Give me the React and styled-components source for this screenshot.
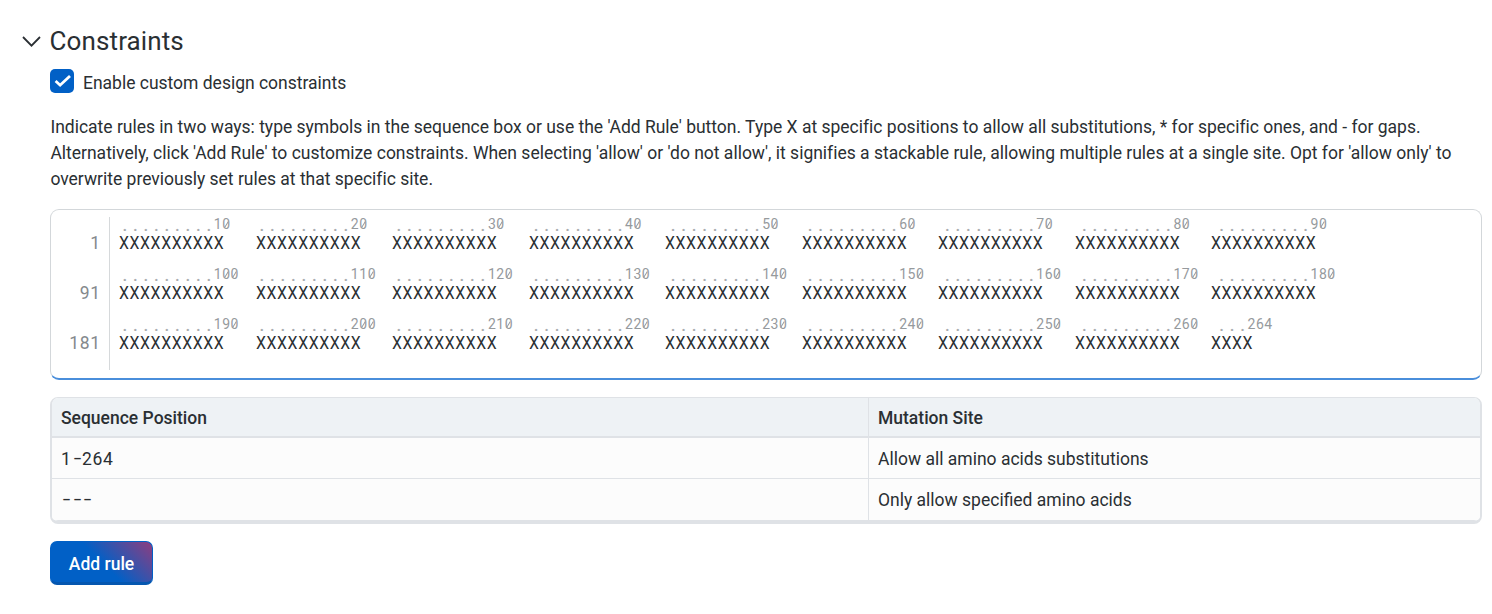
import React from 'react';
import styled, { createGlobalStyle } from 'styled-components';

const GlobalStyle = createGlobalStyle`
  * { box-sizing: border-box; }
  body {
    margin: 0;
    background: #fff;
    color: #2a2f33;
    font-family: Roboto, sans-serif;
    font-size: 17.5px;
    line-height: 26px;
  }
`;

const Page = styled.main`
  height: 614px;
  padding: 24px 10px 0 50px;
  overflow: hidden;
`;

const Heading = styled.h2`
  display: flex;
  align-items: center;
  gap: 8.5px;
  height: 34px;
  margin: 0 0 0 -28px;
  font-size: 26px;
  font-weight: 400;
  line-height: 34px;
  letter-spacing: 0.12px;
`;

const CheckRow = styled.label`
  display: flex;
  align-items: center;
  gap: 9px;
  height: 26px;
  margin-top: 10px;
  letter-spacing: -0.01px;
`;

const CheckBox = styled.span`
  display: flex;
  width: 24px;
  height: 24px;
  margin-top: -1px;
  border-radius: 5px;
  background: #0160c6;
`;

const CheckLabel = styled.span`
  padding-top: 3px;
`;

const Help = styled.p`
  margin: 20px 0 0;
  padding-left: 0.4px;
  white-space: nowrap;
  letter-spacing: -0.007px;
`;

const Editor = styled.section`
  display: flex;
  height: 171px;
  margin-top: 17px;
  padding: 7px 0 9px;
  border: 1px solid #d3d7da;
  border-bottom: 2px solid #4a8edb;
  border-radius: 9px;
`;

const Gutter = styled.div`
  width: 59px;
  height: 153px;
  padding: 13px 9px 0 0;
  border-right: 1px solid #d6d9db;
  color: #84898d;
  text-align: right;
`;

const LineNumber = styled.div`
  height: 50px;
  line-height: 26px;
  letter-spacing: 0.67px;
  margin-right: -0.67px;
`;

const Lines = styled.div`
  padding-left: 9px;
`;

const Line = styled.div`
  height: 50px;
`;

const Ruler = styled.div`
  display: flex;
  height: 16px;
  color: #969a9d;
  font-size: 14px;
  line-height: 14px;
`;

const Tick = styled.span`
  display: flex;
  flex: none;
  width: 137.1px;
`;

const Dot = styled.span`
  width: 10.5px;
  padding-left: 1px;
  line-height: 16px;
  text-align: center;
  color: #a9acaf;
  font-size: 17px;
  font-weight: 500;
`;

const Digit = styled.span`
  position: relative;
  width: 8.4px;
  text-align: center;
  ${(p) => p.$slashed && `
    &::after {
      content: '';
      position: absolute;
      left: 3.7px;
      top: 3.5px;
      width: 1px;
      height: 7px;
      background: currentColor;
      transform: rotate(32deg);
    }
  `}
`;

const Residues = styled.div`
  display: flex;
  height: 20px;
  line-height: 20px;
`;

const Block = styled.span`
  flex: none;
  width: 136.5px;
  letter-spacing: 0.68px;
  white-space: nowrap;
  transform: scaleX(0.904);
  transform-origin: 0 50%;
`;

const Table = styled.div`
  height: 127px;
  margin-top: 17px;
  border: solid #dfe2e6;
  border-width: 1px 2px 3px 2px;
  border-radius: 8px;
  overflow: hidden;
  background: #fcfcfc;
`;

const Row = styled.div`
  display: grid;
  grid-template-columns: 816px 1fr;
  height: ${(p) => (p.$head ? 40 : 41)}px;
  border-bottom: ${(p) => (p.$head ? 2 : 1)}px solid #dfe2e6;
  background: ${(p) => (p.$head ? '#eef2f5' : '#fcfcfc')};
  font-weight: ${(p) => (p.$head ? 500 : 400)};
  &:last-child { height: 42px; }
`;

const Cell = styled.div`
  padding: ${(p) => (p.$head ? 7 : 8)}px 9px 0;
  letter-spacing: ${(p) => (p.$mono ? '0.67px' : 'normal')};
  & + & { border-left: 1px solid #dfe2e6; }
`;

const Dash = styled.span`
  display: inline-block;
  width: 10.5px;
  text-align: center;
  letter-spacing: 0;
  transform: scaleX(0.75);
`;

const AddButton = styled.button`
  display: block;
  width: 103px;
  height: 44px;
  margin-top: 17px;
  padding: 4px 0 0;
  border: 1px solid #0160c6;
  border-bottom: 3px solid #0557b0;
  border-radius: 7px;
  background: linear-gradient(45deg, #0160c6 50%, #8e3d80 100%);
  color: #fff;
  font: 500 17.5px Roboto, sans-serif;
`;

const ROWS = [
  { start: 1, ticks: [10, 20, 30, 40, 50, 60, 70, 80, 90] },
  { start: 91, ticks: [100, 110, 120, 130, 140, 150, 160, 170, 180] },
  { start: 181, ticks: [190, 200, 210, 220, 230, 240, 250, 260, 264] },
];

const blockLength = (tick) => tick % 10 || 10;

function MonoText({ text }) {
  return [...text].map((c, i) => (c === '-' ? <Dash key={i}>–</Dash> : c));
}

function SequenceLine({ ticks }) {
  return (
    <Line>
      <Ruler>
        {ticks.map((t) => (
          <Tick key={t}>
            {Array.from({ length: blockLength(t) - 1 }, (_, i) => <Dot key={`dot${i}`}>.</Dot>)}
            {[...String(t)].map((d, i) => (
              <Digit key={i} $slashed={d === '0'}>{d}</Digit>
            ))}
          </Tick>
        ))}
      </Ruler>
      <Residues>
        {ticks.map((t) => (
          <Block key={t}>{'X'.repeat(blockLength(t))}</Block>
        ))}
      </Residues>
    </Line>
  );
}

export default function App() {
  return (
    <>
      <GlobalStyle />
      <Page>
        <Heading>
          <svg width="19" height="12" viewBox="0 0 19 12" fill="none" stroke="#2a2f33" strokeWidth="1.8">
            <path d="M1 2 9.5 10.6 18 2" />
          </svg>
          Constraints
        </Heading>
        <CheckRow>
          <CheckBox>
            <svg width="24" height="24" viewBox="0 0 24 24" fill="none" stroke="#fff" strokeWidth="2.8">
              <path d="M5.6 12 10.1 16.2 20 6.9" />
            </svg>
          </CheckBox>
          <CheckLabel>Enable custom design constraints</CheckLabel>
        </CheckRow>
        <Help>
          Indicate rules in two ways: type symbols in the sequence box or use the 'Add Rule' button. Type X at specific positions to allow all substitutions, * for specific ones, and - for gaps.
          <br />
          Alternatively, click 'Add Rule' to customize constraints. When selecting 'allow' or 'do not allow', it signifies a stackable rule, allowing multiple rules at a single site. Opt for 'allow only' to
          <br />
          overwrite previously set rules at that specific site.
        </Help>
        <Editor>
          <Gutter>
            {ROWS.map((r) => <LineNumber key={r.start}>{r.start}</LineNumber>)}
          </Gutter>
          <Lines>
            {ROWS.map((r) => <SequenceLine key={r.start} ticks={r.ticks} />)}
          </Lines>
        </Editor>
        <Table>
          <Row $head>
            <Cell $head>Sequence Position</Cell>
            <Cell $head>Mutation Site</Cell>
          </Row>
          <Row>
            <Cell $mono><MonoText text="1-264" /></Cell>
            <Cell>Allow all amino acids substitutions</Cell>
          </Row>
          <Row>
            <Cell $mono><MonoText text="---" /></Cell>
            <Cell>Only allow specified amino acids</Cell>
          </Row>
        </Table>
        <AddButton>Add rule</AddButton>
      </Page>
    </>
  );
}
